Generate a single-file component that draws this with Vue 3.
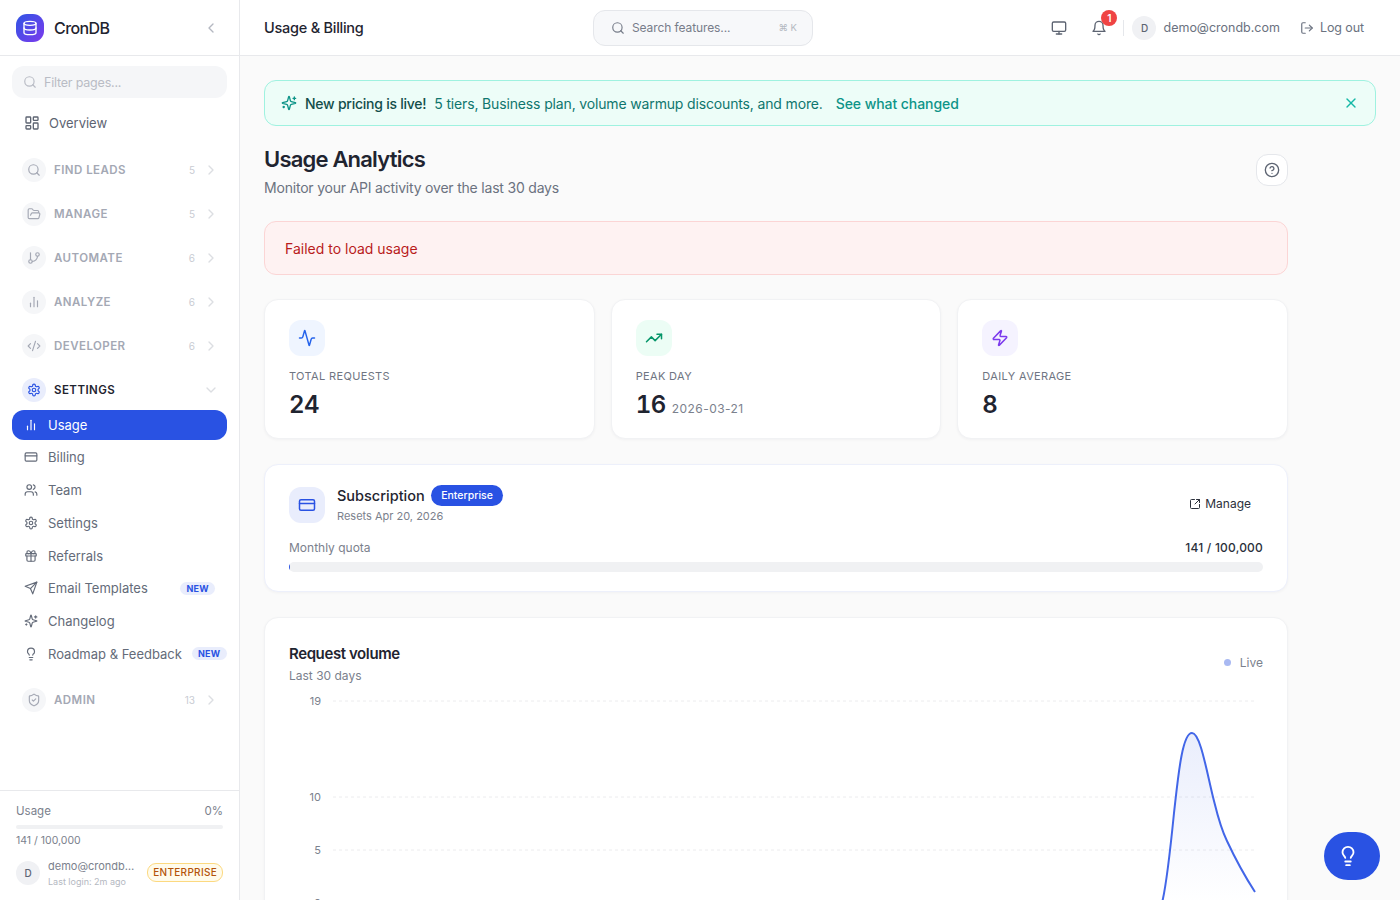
<template>
  <div class="app">
    <aside class="sidebar">
      <div class="brand">
        <div class="brand-logo"><Icon name="database" :size="16" /></div>
        <span class="brand-name">CronDB</span>
        <Icon name="chevronLeft" :size="16" class="brand-toggle" />
      </div>

      <nav class="nav">
        <div class="filter">
          <Icon name="search" :size="14" />
          <span>Filter pages...</span>
        </div>
        <a class="overview"><Icon name="dashboard" :size="16" />Overview</a>

        <div v-for="group in groups" :key="group.label" class="group" :class="{ open: group.items }">
          <div class="group-head">
            <span class="group-icon"><Icon :name="group.icon" :size="14" /></span>
            <span class="group-label">{{ group.label }}</span>
            <span v-if="!group.items" class="group-count">{{ group.count }}</span>
            <Icon :name="group.items ? 'chevronDown' : 'chevronRight'" :size="16" class="group-chevron" />
          </div>
          <div v-if="group.items" class="group-items">
            <a
              v-for="item in group.items"
              :key="item.label"
              class="nav-item"
              :class="{ active: item.active }"
            >
              <Icon :name="item.icon" :size="14" />
              <span>{{ item.label }}</span>
              <em v-if="item.isNew" class="new-tag">NEW</em>
            </a>
          </div>
        </div>
      </nav>

      <div class="side-foot">
        <div class="usage-row"><span>Usage</span><span>0%</span></div>
        <div class="usage-track"></div>
        <div class="usage-count">141 / 100,000</div>
        <div class="side-user">
          <span class="avatar">D</span>
          <div class="side-user-text">
            <div class="side-email">demo@crondb.com</div>
            <div class="side-login">Last login: 2m ago</div>
          </div>
          <span class="plan-tag">ENTERPRISE</span>
        </div>
      </div>
    </aside>

    <div class="main">
      <header class="topbar">
        <div class="topbar-title">Usage &amp; Billing</div>
        <div class="search">
          <Icon name="search" :size="14" />
          <span class="search-text">Search features...</span>
          <span class="search-kbd">⌘ K</span>
        </div>
        <div class="topbar-right">
          <Icon name="monitor" :size="16" class="top-icon" />
          <span class="bell">
            <Icon name="bell" :size="16" class="top-icon" />
            <b class="bell-badge">1</b>
          </span>
          <span class="top-sep"></span>
          <span class="avatar">D</span>
          <span class="top-email">demo@crondb.com</span>
          <span class="logout"><Icon name="logout" :size="14" />Log out</span>
        </div>
      </header>

      <main class="content">
        <div class="banner">
          <Icon name="sparkles" :size="16" class="banner-icon" />
          <strong>New pricing is live!</strong>
          <span class="banner-text">5 tiers, Business plan, volume warmup discounts, and more.</span>
          <a class="banner-link">See what changed</a>
          <Icon name="x" :size="16" class="banner-close" />
        </div>

        <div class="page">
          <div class="page-head">
            <div>
              <h1>Usage Analytics</h1>
              <p>Monitor your API activity over the last 30 days</p>
            </div>
            <button class="help"><Icon name="help" :size="16" /></button>
          </div>

          <div class="error">Failed to load usage</div>

          <div class="stats">
            <div v-for="stat in stats" :key="stat.label" class="card stat">
              <span class="stat-icon" :class="stat.tone"><Icon :name="stat.icon" :size="18" /></span>
              <div class="stat-label">{{ stat.label }}</div>
              <div class="stat-value">{{ stat.value }}<small v-if="stat.note">{{ stat.note }}</small></div>
            </div>
          </div>

          <div class="card sub">
            <div class="sub-head">
              <span class="stat-icon indigo"><Icon name="card" :size="18" /></span>
              <div class="sub-info">
                <div class="sub-title">Subscription <span class="sub-plan">Enterprise</span></div>
                <div class="sub-reset">Resets Apr 20, 2026</div>
              </div>
              <a class="sub-manage"><Icon name="external" :size="12" />Manage</a>
            </div>
            <div class="quota-row"><span>Monthly quota</span><b>141 / 100,000</b></div>
            <div class="quota-track"><div class="quota-fill" :style="{ width: quotaPct + '%' }"></div></div>
          </div>

          <div class="card chart">
            <div class="chart-head">
              <div>
                <h2>Request volume</h2>
                <p>Last 30 days</p>
              </div>
              <span class="live"><i></i>Live</span>
            </div>
            <svg class="chart-svg" width="974" height="220" viewBox="0 0 974 220">
              <defs>
                <linearGradient id="area" x1="0" y1="0" x2="0" y2="1">
                  <stop offset="0" stop-color="#2952e3" stop-opacity="0.1" />
                  <stop offset="1" stop-color="#2952e3" stop-opacity="0" />
                </linearGradient>
              </defs>
              <g v-for="tick in ticks" :key="tick.label">
                <line x1="44" x2="965" :y1="tick.y" :y2="tick.y" class="grid" />
                <text x="32" :y="tick.y + 4" text-anchor="end" class="axis">{{ tick.label }}</text>
              </g>
              <path :d="curve + ' L966 212 L873 212 Z'" fill="url(#area)" />
              <path :d="curve" class="line" />
            </svg>
          </div>
        </div>
      </main>
    </div>

    <button class="fab"><Icon name="bulb" :size="22" /></button>
  </div>
</template>

<script setup>
import { h } from 'vue';

const icons = {
  database: '<ellipse cx="12" cy="5" rx="9" ry="3"/><path d="M3 5V19A9 3 0 0 0 21 19V5"/><path d="M3 12A9 3 0 0 0 21 12"/>',
  chevronLeft: '<path d="m15 18-6-6 6-6"/>',
  chevronRight: '<path d="m9 18 6-6-6-6"/>',
  chevronDown: '<path d="m6 9 6 6 6-6"/>',
  search: '<circle cx="11" cy="11" r="8"/><path d="m21 21-4.3-4.3"/>',
  dashboard: '<rect width="7" height="9" x="3" y="3" rx="1"/><rect width="7" height="5" x="14" y="3" rx="1"/><rect width="7" height="9" x="14" y="12" rx="1"/><rect width="7" height="5" x="3" y="16" rx="1"/>',
  folder: '<path d="m6 14 1.5-2.9A2 2 0 0 1 9.24 10H20a2 2 0 0 1 1.94 2.5l-1.54 6a2 2 0 0 1-1.95 1.5H4a2 2 0 0 1-2-2V5a2 2 0 0 1 2-2h3.9a2 2 0 0 1 1.69.9l.81 1.2a2 2 0 0 0 1.67.9H18a2 2 0 0 1 2 2v2"/>',
  branch: '<line x1="6" x2="6" y1="3" y2="15"/><circle cx="18" cy="6" r="3"/><circle cx="6" cy="18" r="3"/><path d="M18 9a9 9 0 0 1-9 9"/>',
  bars: '<line x1="18" x2="18" y1="20" y2="10"/><line x1="12" x2="12" y1="20" y2="4"/><line x1="6" x2="6" y1="20" y2="14"/>',
  code: '<path d="m18 16 4-4-4-4"/><path d="m6 8-4 4 4 4"/><path d="m14.5 4-5 16"/>',
  gear: '<path d="M12.22 2h-.44a2 2 0 0 0-2 2v.18a2 2 0 0 1-1 1.73l-.43.25a2 2 0 0 1-2 0l-.15-.08a2 2 0 0 0-2.73.73l-.22.38a2 2 0 0 0 .73 2.73l.15.1a2 2 0 0 1 1 1.72v.51a2 2 0 0 1-1 1.74l-.15.09a2 2 0 0 0-.73 2.73l.22.38a2 2 0 0 0 2.73.73l.15-.08a2 2 0 0 1 2 0l.43.25a2 2 0 0 1 1 1.73V20a2 2 0 0 0 2 2h.44a2 2 0 0 0 2-2v-.18a2 2 0 0 1 1-1.73l.43-.25a2 2 0 0 1 2 0l.15.08a2 2 0 0 0 2.73-.73l.22-.39a2 2 0 0 0-.73-2.73l-.15-.08a2 2 0 0 1-1-1.74v-.5a2 2 0 0 1 1-1.74l.15-.09a2 2 0 0 0 .73-2.73l-.22-.38a2 2 0 0 0-2.73-.73l-.15.08a2 2 0 0 1-2 0l-.43-.25a2 2 0 0 1-1-1.73V4a2 2 0 0 0-2-2z"/><circle cx="12" cy="12" r="3"/>',
  card: '<rect width="20" height="14" x="2" y="5" rx="2"/><line x1="2" x2="22" y1="10" y2="10"/>',
  users: '<path d="M16 21v-2a4 4 0 0 0-4-4H6a4 4 0 0 0-4 4v2"/><circle cx="9" cy="7" r="4"/><path d="M22 21v-2a4 4 0 0 0-3-3.87"/><path d="M16 3.13a4 4 0 0 1 0 7.75"/>',
  gift: '<rect x="3" y="8" width="18" height="4" rx="1"/><path d="M12 8v13"/><path d="M19 12v7a2 2 0 0 1-2 2H7a2 2 0 0 1-2-2v-7"/><path d="M7.5 8a2.5 2.5 0 0 1 0-5A4.8 8 0 0 1 12 8a4.8 8 0 0 1 4.5-5 2.5 2.5 0 0 1 0 5"/>',
  send: '<path d="m22 2-7 20-4-9-9-4Z"/><path d="M22 2 11 13"/>',
  sparkles: '<path d="M9.937 15.5A2 2 0 0 0 8.5 14.063l-6.135-1.582a.5.5 0 0 1 0-.962L8.5 9.936A2 2 0 0 0 9.937 8.5l1.582-6.135a.5.5 0 0 1 .963 0L14.063 8.5A2 2 0 0 0 15.5 9.937l6.135 1.581a.5.5 0 0 1 0 .964L15.5 14.063a2 2 0 0 0-1.437 1.437l-1.582 6.135a.5.5 0 0 1-.963 0z"/><path d="M20 3v4"/><path d="M22 5h-4"/><path d="M4 17v2"/><path d="M5 18H3"/>',
  bulb: '<path d="M15 14c.2-1 .7-1.7 1.5-2.5 1-.9 1.5-2.2 1.5-3.5A6 6 0 0 0 6 8c0 1 .2 2.2 1.5 3.5.7.7 1.3 1.5 1.5 2.5"/><path d="M9 18h6"/><path d="M10 22h4"/>',
  shield: '<path d="M20 13c0 5-3.5 7.5-7.66 8.95a1 1 0 0 1-.67-.01C7.5 20.5 4 18 4 13V6a1 1 0 0 1 1-1c2 0 4.5-1.2 6.24-2.72a1.17 1.17 0 0 1 1.52 0C14.51 3.81 17 5 19 5a1 1 0 0 1 1 1z"/><path d="m9 12 2 2 4-4"/>',
  monitor: '<rect width="20" height="14" x="2" y="3" rx="2"/><line x1="8" x2="16" y1="21" y2="21"/><line x1="12" x2="12" y1="17" y2="21"/>',
  bell: '<path d="M6 8a6 6 0 0 1 12 0c0 7 3 9 3 9H3s3-2 3-9"/><path d="M10.3 21a1.94 1.94 0 0 0 3.4 0"/>',
  logout: '<path d="M9 21H5a2 2 0 0 1-2-2V5a2 2 0 0 1 2-2h4"/><polyline points="16 17 21 12 16 7"/><line x1="21" x2="9" y1="12" y2="12"/>',
  x: '<path d="M18 6 6 18"/><path d="m6 6 12 12"/>',
  help: '<circle cx="12" cy="12" r="10"/><path d="M9.09 9a3 3 0 0 1 5.83 1c0 2-3 3-3 3"/><path d="M12 17h.01"/>',
  activity: '<path d="M22 12h-2.48a2 2 0 0 0-1.93 1.46l-2.35 8.36a.25.25 0 0 1-.48 0L9.24 2.18a.25.25 0 0 0-.48 0l-2.35 8.36A2 2 0 0 1 4.49 12H2"/>',
  trending: '<polyline points="22 7 13.5 15.5 8.5 10.5 2 17"/><polyline points="16 7 22 7 22 13"/>',
  zap: '<path d="M4 14a1 1 0 0 1-.78-1.63l9.9-10.2a.5.5 0 0 1 .86.46l-1.92 6.02A1 1 0 0 0 13 10h7a1 1 0 0 1 .78 1.63l-9.9 10.2a.5.5 0 0 1-.86-.46l1.92-6.02A1 1 0 0 0 11 14z"/>',
  external: '<path d="M21 13v6a2 2 0 0 1-2 2H5a2 2 0 0 1-2-2V5a2 2 0 0 1 2-2h6"/><path d="m21 3-9 9"/><path d="M15 3h6v6"/>',
};

const Icon = (props) =>
  h('svg', {
    viewBox: '0 0 24 24',
    width: props.size,
    height: props.size,
    fill: 'none',
    stroke: 'currentColor',
    'stroke-width': 2,
    'stroke-linecap': 'round',
    'stroke-linejoin': 'round',
    innerHTML: icons[props.name],
  });
Icon.props = ['name', 'size'];

const groups = [
  { label: 'FIND LEADS', icon: 'search', count: 5 },
  { label: 'MANAGE', icon: 'folder', count: 5 },
  { label: 'AUTOMATE', icon: 'branch', count: 6 },
  { label: 'ANALYZE', icon: 'bars', count: 6 },
  { label: 'DEVELOPER', icon: 'code', count: 6 },
  {
    label: 'SETTINGS',
    icon: 'gear',
    count: 7,
    items: [
      { label: 'Usage', icon: 'bars', active: true },
      { label: 'Billing', icon: 'card' },
      { label: 'Team', icon: 'users' },
      { label: 'Settings', icon: 'gear' },
      { label: 'Referrals', icon: 'gift' },
      { label: 'Email Templates', icon: 'send', isNew: true },
      { label: 'Changelog', icon: 'sparkles' },
      { label: 'Roadmap & Feedback', icon: 'bulb', isNew: true },
    ],
  },
  { label: 'ADMIN', icon: 'shield', count: 13 },
];

const stats = [
  { label: 'TOTAL REQUESTS', value: '24', icon: 'activity', tone: 'blue' },
  { label: 'PEAK DAY', value: '16', note: '2026-03-21', icon: 'trending', tone: 'green' },
  { label: 'DAILY AVERAGE', value: '8', icon: 'zap', tone: 'violet' },
];

const quotaPct = (141 / 100000) * 100;

// y values sit on the svg, first grid line is 8px from its top
const ticks = [
  { label: '19', y: 8 },
  { label: '10', y: 104 },
  { label: '5', y: 157 },
  { label: '0', y: 210 },
];

const curve =
  'M873 210 C878 190 881 160 885 120 C889 85 893 40 903 40 C911 40 917 75 924 104 C928 120 931 134 938 148 C945 163 955 182 966 199';
</script>

<style>
html,
body {
  margin: 0;
  height: 100%;
  overflow: hidden;
}
</style>

<style scoped>
.app {
  display: flex;
  height: 900px;
  overflow: hidden;
  position: relative;
  background: #fafafa;
  color: #1f2430;
  font-family: Inter, "Liberation Sans", sans-serif;
  font-size: 13px;
}

/* sidebar */
.sidebar {
  flex: none;
  width: 240px;
  box-sizing: border-box;
  display: flex;
  flex-direction: column;
  background: #fff;
  border-right: 1px solid #e8e9ec;
}

.brand {
  flex: none;
  height: 55px;
  display: flex;
  align-items: center;
  padding: 0 20px 0 16px;
  border-bottom: 1px solid #e8e9ec;
}

.brand-logo {
  width: 28px;
  height: 28px;
  border-radius: 11px;
  display: flex;
  align-items: center;
  justify-content: center;
  color: #fff;
  background: linear-gradient(135deg, #2f55e4, #7c3aed);
}

.brand-name {
  margin-left: 10px;
  font-size: 16px;
  font-weight: 500;
  letter-spacing: -0.6px;
  flex: 1;
}

.brand-toggle {
  color: #b4b8c1;
}

.nav {
  flex: 1;
  min-height: 0;
  padding: 10px 12px 0;
}

.filter {
  height: 32px;
  display: flex;
  align-items: center;
  gap: 7px;
  padding: 0 11px;
  border-radius: 12px;
  background: #f5f6f8;
  color: #b9bcc5;
  font-size: 12.5px;
  letter-spacing: -0.2px;
}

.overview {
  height: 30px;
  margin-top: 10px;
  display: flex;
  align-items: center;
  gap: 9px;
  padding: 0 12px;
  color: #5d6472;
  font-size: 13px;
}

.group {
  margin-top: 10px;
}

.group + .group {
  margin-top: 0;
}

.group.open {
  margin-top: 2px;
}

.group.open + .group {
  margin-top: 7.6px;
}

.group-head {
  height: 44px;
  display: flex;
  align-items: center;
  padding: 0 8px 0 10px;
  color: #a4a8b4;
}

.group-icon {
  width: 24px;
  height: 24px;
  border-radius: 50%;
  background: #f5f6f8;
  display: flex;
  align-items: center;
  justify-content: center;
  margin-right: 8px;
}

.group-label {
  flex: 1;
  font-size: 11.5px;
  font-weight: 600;
  letter-spacing: 0.45px;
}

.group-count {
  font-size: 10px;
  color: #c9ccd3;
  margin-right: 8px;
}

.group-chevron {
  color: #dcdee2;
}

.open .group-head {
  color: #1f2430;
  height: 40px;
}

.open .group-icon {
  background: #e9edfc;
  color: #2952e3;
}

.group-items {
  display: flex;
  flex-direction: column;
}

.nav-item {
  flex: none;
  height: 32.8px;
  display: flex;
  align-items: center;
  gap: 10px;
  padding: 0 12px;
  border-radius: 12px;
  color: #646b79;
  font-size: 13px;
  white-space: nowrap;
}

.nav-item svg,
.nav-item span {
  flex: none;
}

.nav-item.active {
  height: 30px;
  margin-bottom: 0.8px;
  background: #2952e3;
  color: #fff;
}

.new-tag {
  flex: none;
  margin-left: auto;
  padding: 0 6px;
  height: 13px;
  line-height: 13px;
  border-radius: 7px;
  background: #e9edfc;
  color: #2952e3;
  font-size: 9px;
  font-style: normal;
  font-weight: 700;
  letter-spacing: 0.3px;
}

.side-foot {
  flex: none;
  height: 110px;
  box-sizing: border-box;
  padding: 13px 16px 0;
  border-top: 1px solid #e8e9ec;
  color: #7b818d;
  font-size: 11px;
}

.usage-row {
  display: flex;
  justify-content: space-between;
  font-size: 11.5px;
  line-height: 14px;
}

.usage-track {
  height: 4px;
  margin-top: 7px;
  border-radius: 2px;
  background: #f0f1f3;
}

.usage-count {
  margin-top: 5px;
  line-height: 14px;
  font-size: 10.5px;
}

.side-user {
  margin-top: 8px;
  display: flex;
  align-items: center;
}

.avatar {
  flex: 0 0 24px;
  width: 24px;
  height: 24px;
  border-radius: 50%;
  display: flex;
  align-items: center;
  justify-content: center;
  background: #f0f1f4;
  color: #5d6472;
  font-size: 10px;
  font-weight: 500;
}

.side-user-text {
  flex: 1;
  min-width: 0;
  margin-left: 8px;
  margin-right: 11px;
  padding-top: 2px;
}

.side-email {
  font-size: 11px;
  line-height: 16px;
  overflow: hidden;
  white-space: nowrap;
  text-overflow: ellipsis;
}

.side-login {
  font-size: 9px;
  line-height: 15px;
  color: #b4b8c1;
  white-space: nowrap;
}

.plan-tag {
  flex: none;
  padding: 0 5px;
  height: 17px;
  line-height: 17px;
  border: 1px solid #fcd980;
  border-radius: 9px;
  background: #fffbeb;
  color: #b45309;
  font-size: 10px;
  font-weight: 500;
  letter-spacing: 0.3px;
}

/* main column */
.main {
  flex: 1;
  min-width: 0;
  display: flex;
  flex-direction: column;
}

.topbar {
  flex: none;
  height: 55px;
  display: flex;
  align-items: center;
  padding: 0 36px 0 24px;
  background: #fff;
  border-bottom: 1px solid #e8e9ec;
}

.topbar-title {
  flex: 0 0 329px;
  font-size: 14.5px;
  font-weight: 500;
  letter-spacing: -0.25px;
}

.search {
  box-sizing: border-box;
  width: 220px;
  height: 36px;
  display: flex;
  align-items: center;
  gap: 7px;
  padding: 0 15px 0 17px;
  border: 1px solid #e5e7eb;
  border-radius: 12px;
  background: #f7f8fa;
  color: #777d8a;
  font-size: 12px;
}

.search-text {
  flex: 1;
  letter-spacing: -0.1px;
}

.search-kbd {
  font-size: 9.5px;
  color: #b4b8c1;
}

.topbar-right {
  flex: 1;
  display: flex;
  align-items: center;
  justify-content: flex-end;
  color: #5d6472;
}

.top-icon {
  display: block;
}

.bell {
  position: relative;
  margin-left: 24px;
}

.bell-badge {
  position: absolute;
  top: -10px;
  right: -10px;
  width: 16px;
  height: 16px;
  border-radius: 50%;
  background: #ef4444;
  color: #fff;
  font-size: 10px;
  font-weight: 600;
  line-height: 16px;
  text-align: center;
}

.top-sep {
  width: 1px;
  height: 16px;
  margin: 0 8px 0 16px;
  background: #e5e7eb;
}

.top-email {
  margin-left: 7px;
  font-size: 12.5px;
  color: #6b7280;
}

.logout {
  margin-left: 20px;
  display: flex;
  align-items: center;
  gap: 6px;
  font-size: 12.5px;
  letter-spacing: -0.1px;
  color: #6b7280;
}

.content {
  flex: 1;
  min-height: 0;
  overflow: hidden;
  padding: 24px 24px 0;
}

.banner {
  box-sizing: border-box;
  height: 46px;
  display: flex;
  align-items: center;
  padding: 0 16px;
  border: 1px solid #9ff2e0;
  border-radius: 12px;
  background: #edfdf8;
  color: #0f766e;
  font-size: 14px;
  letter-spacing: -0.15px;
}

.banner-icon {
  color: #0d9488;
  margin-right: 8px;
}

.banner strong {
  font-weight: 500;
  color: #134e4a;
  margin-right: 8px;
  letter-spacing: -0.25px;
}

.banner-link {
  margin-left: 13px;
  color: #0d9488;
  font-weight: 500;
  letter-spacing: -0.07px;
}

.banner-close {
  margin-left: auto;
  color: #14b8a6;
}

.page {
  width: 1024px;
}

.page-head {
  margin-top: 20px;
  display: flex;
  justify-content: space-between;
  align-items: flex-start;
}

.page-head h1 {
  margin: 0;
  font-size: 22px;
  line-height: 26px;
  font-weight: 600;
  letter-spacing: -0.8px;
}

.page-head p {
  margin: 7px 0 0;
  font-size: 14px;
  line-height: 18px;
  color: #6b7280;
  letter-spacing: -0.2px;
}

.help {
  width: 32px;
  height: 32px;
  margin-top: 8px;
  padding: 0;
  display: flex;
  align-items: center;
  justify-content: center;
  border: 1px solid #e5e7eb;
  border-radius: 12px;
  background: #fff;
  color: #5d6472;
}

.error {
  box-sizing: border-box;
  height: 54px;
  margin-top: 24px;
  display: flex;
  align-items: center;
  padding: 0 20px;
  border: 1px solid #fbd5d5;
  border-radius: 12px;
  background: #fef2f2;
  color: #b91c1c;
  font-size: 14px;
}

.card {
  box-sizing: border-box;
  background: #fff;
  border: 1px solid #f1f2f4;
  border-radius: 14px;
  box-shadow: 0 1px 3px rgba(17, 24, 39, 0.04);
}

.stats {
  margin-top: 24px;
  display: grid;
  grid-template-columns: repeat(3, 1fr);
  gap: 16px;
}

.stat {
  height: 140px;
  padding: 20px 24px;
}

.stat-icon {
  width: 36px;
  height: 36px;
  flex: none;
  display: flex;
  align-items: center;
  justify-content: center;
  border-radius: 12px;
}

.stat-icon.blue {
  background: #eff5ff;
  color: #2563eb;
}

.stat-icon.green {
  background: #ecfdf5;
  color: #059669;
}

.stat-icon.violet {
  background: #f5f3ff;
  color: #7c3aed;
}

.stat-icon.indigo {
  background: #e9edfc;
  color: #2952e3;
}

.stat-label {
  margin-top: 13px;
  font-size: 11px;
  line-height: 14px;
  letter-spacing: 0.35px;
  color: #6f7582;
}

.stat-value {
  margin-top: 7px;
  font-size: 24px;
  line-height: 30px;
  font-weight: 600;
  letter-spacing: -0.5px;
  font-feature-settings: "tnum";
}

.stat-value small {
  margin-left: 6px;
  font-size: 12px;
  font-weight: 400;
  color: #7b818d;
  letter-spacing: 0.45px;
  font-feature-settings: normal;
}

.sub {
  height: 128px;
  margin-top: 25px;
  padding: 20px 24px;
  border-color: #edf0fb;
}

.sub-head {
  display: flex;
  align-items: center;
}

.sub-info {
  margin-left: 12px;
  flex: 1;
}

.sub-title {
  display: flex;
  align-items: center;
  gap: 6px;
  font-size: 14.5px;
  line-height: 20px;
  font-weight: 500;
}

.sub-plan {
  height: 21px;
  padding: 0 10.5px;
  line-height: 21px;
  border-radius: 11px;
  background: #2952e3;
  color: #fff;
  font-size: 10.5px;
  font-weight: 500;
}

.sub-reset {
  margin-top: 2px;
  font-size: 11px;
  line-height: 16px;
  color: #7b818d;
}

.sub-manage {
  margin: 0 12px 2px 0;
  display: flex;
  align-items: center;
  gap: 4px;
  font-size: 12px;
  color: #2b303b;
}

.quota-row {
  margin-top: 16px;
  display: flex;
  justify-content: space-between;
  font-size: 12px;
  line-height: 16px;
  color: #7b818d;
}

.quota-row b {
  font-weight: 500;
  color: #2b303b;
  letter-spacing: 0.2px;
}

.quota-track {
  height: 10px;
  margin-top: 6px;
  overflow: hidden;
  border-radius: 5px;
  background: #f0f1f3;
}

.quota-fill {
  height: 100%;
  background: #2952e3;
}

.chart {
  margin-top: 25px;
  padding: 25px 24px 0;
  height: 400px;
}

.chart-head {
  display: flex;
  justify-content: space-between;
}

.chart-head h2 {
  margin: 0;
  font-size: 15px;
  line-height: 22px;
  font-weight: 600;
  letter-spacing: -0.4px;
}

.chart-head p {
  margin: 3px 0 0;
  font-size: 12px;
  line-height: 16px;
  color: #7b818d;
}

.live {
  height: 16px;
  margin-top: 11px;
  display: flex;
  align-items: center;
  gap: 9px;
  font-size: 12px;
  color: #7b818d;
}

.live i {
  width: 7px;
  height: 7px;
  border-radius: 50%;
  background: #a9b9f2;
}

.chart-svg {
  display: block;
  margin-top: 9px;
}

.grid {
  stroke: #ececee;
  stroke-dasharray: 3 3;
}

.axis {
  fill: #7b818d;
  font-size: 11px;
}

.line {
  fill: none;
  stroke: #4266e8;
  stroke-width: 2;
}

/* feedback button */
.fab {
  position: absolute;
  right: 20px;
  bottom: 20px;
  width: 56px;
  height: 48px;
  padding: 0 8px 0 0;
  display: flex;
  align-items: center;
  justify-content: center;
  border: none;
  border-radius: 24px;
  background: #2952e3;
  color: #fff;
}
</style>
